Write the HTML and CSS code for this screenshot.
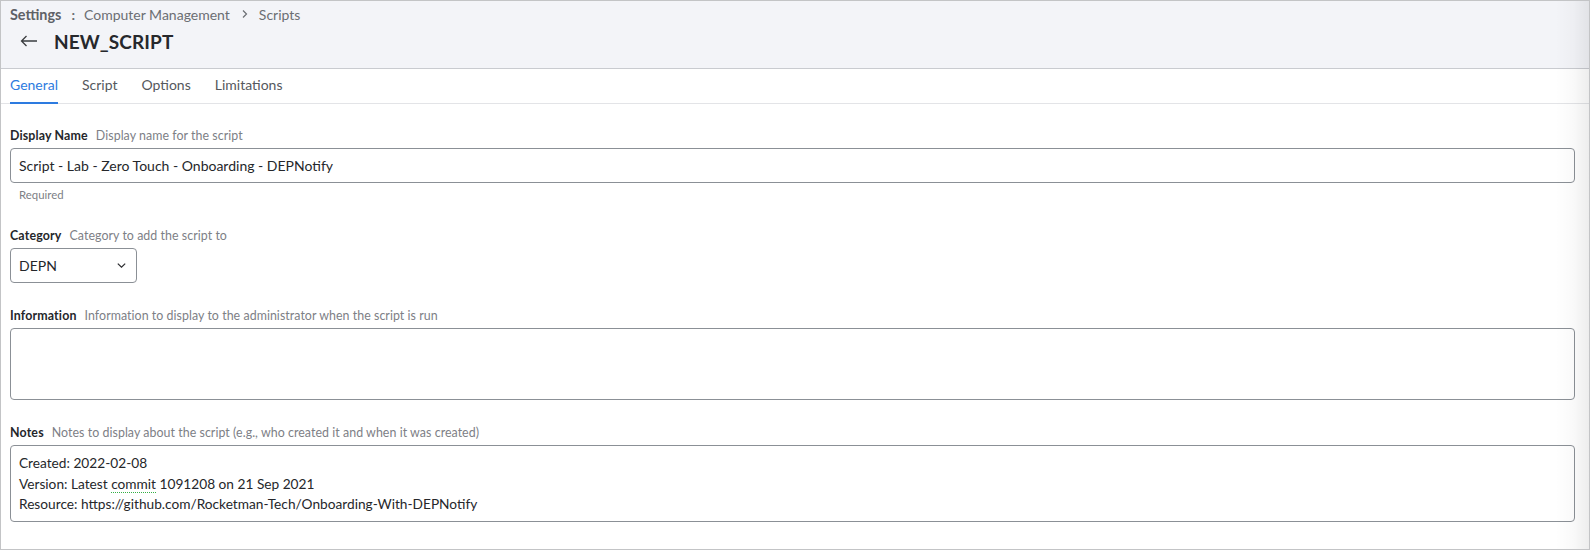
FILE: index.html
```html
<!DOCTYPE html>
<html lang="en">
<head>
<meta charset="utf-8">
<title>NEW_SCRIPT</title>
<link rel="stylesheet" href="styles.css">
</head>
<body>
<div class="frame">
  <header class="top">
    <div class="crumbs">
      <span class="crumb-root">Settings</span>
      <span class="crumb-sep">:</span>
      <span class="crumb">Computer Management</span>
      <svg class="crumb-chev" width="8" height="10" viewBox="0 0 8 10"><path d="M2 1.5 L5.5 5 L2 8.5" fill="none" stroke="#6b6e73" stroke-width="1.2"/></svg>
      <span class="crumb">Scripts</span>
    </div>
    <div class="titlerow">
      <svg class="back" width="18" height="12" viewBox="0 0 18 12"><path d="M17 6 H1.5 M6.5 1 L1.5 6 L6.5 11" fill="none" stroke="#3a3c40" stroke-width="1.3"/></svg>
      <h1 class="title">NEW_SCRIPT</h1>
    </div>
  </header>
  <nav class="tabs">
    <span class="tab active">General</span>
    <span class="tab">Script</span>
    <span class="tab">Options</span>
    <span class="tab">Limitations</span>
  </nav>
  <main class="form">
    <div class="field">
      <div class="label"><b>Display Name</b><span class="desc">Display name for the script</span></div>
      <div class="input">Script - Lab - Zero Touch - Onboarding - DEPNotify</div>
      <div class="hint">Required</div>
    </div>
    <div class="field">
      <div class="label"><b>Category</b><span class="desc">Category to add the script to</span></div>
      <div class="select"><span>DEPN</span><svg width="9" height="5" viewBox="0 0 9 5"><path d="M0.8 0.6 L4.5 4.2 L8.2 0.6" fill="none" stroke="#2c2d30" stroke-width="1.2"/></svg></div>
    </div>
    <div class="field">
      <div class="label"><b>Information</b><span class="desc">Information to display to the administrator when the script is run</span></div>
      <div class="textarea info"></div>
    </div>
    <div class="field">
      <div class="label"><b>Notes</b><span class="desc">Notes to display about the script (e.g., who created it and when it was created)</span></div>
      <div class="textarea notes">
        <div>Created: 2022-02-08</div>
        <div>Version: Latest <span class="spell">commit</span> 1091208 on 21 Sep 2021</div>
        <div>Resource: https://github.com/Rocketman-Tech/Onboarding-With-DEPNotify</div>
      </div>
    </div>
  </main>
  <div class="edge-shadow"></div>
</div>
</body>
</html>
```

FILE: styles.css
```css
* { box-sizing: border-box; }
html, body { margin: 0; padding: 0; background: #ffffff; }
body {
  font-family: Lato, "Open Sans", "Liberation Sans", sans-serif;
  color: #25272b;
}
.frame {
  position: relative;
  width: 1590px;
  height: 550px;
  border: 1px solid #c3c4c6;
  overflow: hidden;
  background: #ffffff;
}
.top {
  height: 68px;
  background: #f3f4f8;
  border-bottom: 1px solid #c9cbd0;
  padding: 3px 0 0 9px;
}
.crumbs {
  display: flex;
  align-items: center;
  height: 20px;
  font-size: 14px;
  color: #6b6e73;
}
.crumb-root { font-weight: 700; color: #5e6166; font-size: 14.4px; }
.crumb-sep { margin: 0 9px 0 10px; font-weight: 700; }
.crumb-chev { margin: 0 10px 0 11px; }
.titlerow {
  display: flex;
  align-items: center;
  height: 30px;
  margin-top: 2px;
  padding-left: 10px;
}
.back { margin-right: 16px; }
.title {
  margin: 0;
  font-size: 19px;
  font-weight: 700;
  color: #26282c;
  letter-spacing: 0.1px;
}
.tabs {
  display: flex;
  height: 35px;
  border-bottom: 1px solid #e3e4e7;
  padding-left: 9px;
  gap: 24px;
}
.tab {
  display: flex;
  align-items: center;
  height: 35px;
  margin-bottom: -1px;
  border-bottom: 2px solid transparent;
  font-size: 14px;
  color: #55585d;
  padding-bottom: 2px;
}
.tab.active { color: #2d7be0; border-bottom-color: #2d7be0; }
.form {
  padding: 23px 14px 0 9px;
}
.field { margin-bottom: 24px; }
.field:first-child { margin-bottom: 25px; }
.label {
  display: flex;
  align-items: center;
  height: 16px;
  font-size: 12.4px;
  margin-bottom: 5px;
}
.label b { font-weight: 700; color: #25272b; letter-spacing: 0.15px; }
.desc { color: #7d8086; margin-left: 8px; letter-spacing: 0.05px; }
.input, .select, .textarea {
  border: 1px solid #8b9096;
  border-radius: 4px;
  font-size: 14px;
  color: #25272b;
  background: #ffffff;
}
.input {
  height: 35px;
  display: flex;
  align-items: center;
  padding: 0 8px;
}
.hint {
  margin-top: 5px;
  height: 14px;
  line-height: 14px;
  font-size: 11.4px;
  color: #7d8086;
  padding-left: 9px;
}
.select {
  width: 127px;
  height: 35px;
  display: flex;
  align-items: center;
  justify-content: space-between;
  padding: 0 10px 0 8px;
}
.textarea.info { height: 72px; }
.textarea.notes {
  height: 77px;
  padding: 7px 8px;
  line-height: 20.5px;
  font-size: 13.7px;
}
.spell {
  text-decoration-line: underline;
  text-decoration-style: dotted;
  text-decoration-color: #34b045;
  text-decoration-thickness: 1px;
  text-underline-offset: 3px;
}
.edge-shadow {
  position: absolute;
  top: 0;
  right: 0;
  width: 34px;
  height: 100%;
  background: linear-gradient(to right, rgba(0,0,0,0) 0%, rgba(0,0,0,0.025) 55%, rgba(0,0,0,0.07) 100%);
  pointer-events: none;
}
```
